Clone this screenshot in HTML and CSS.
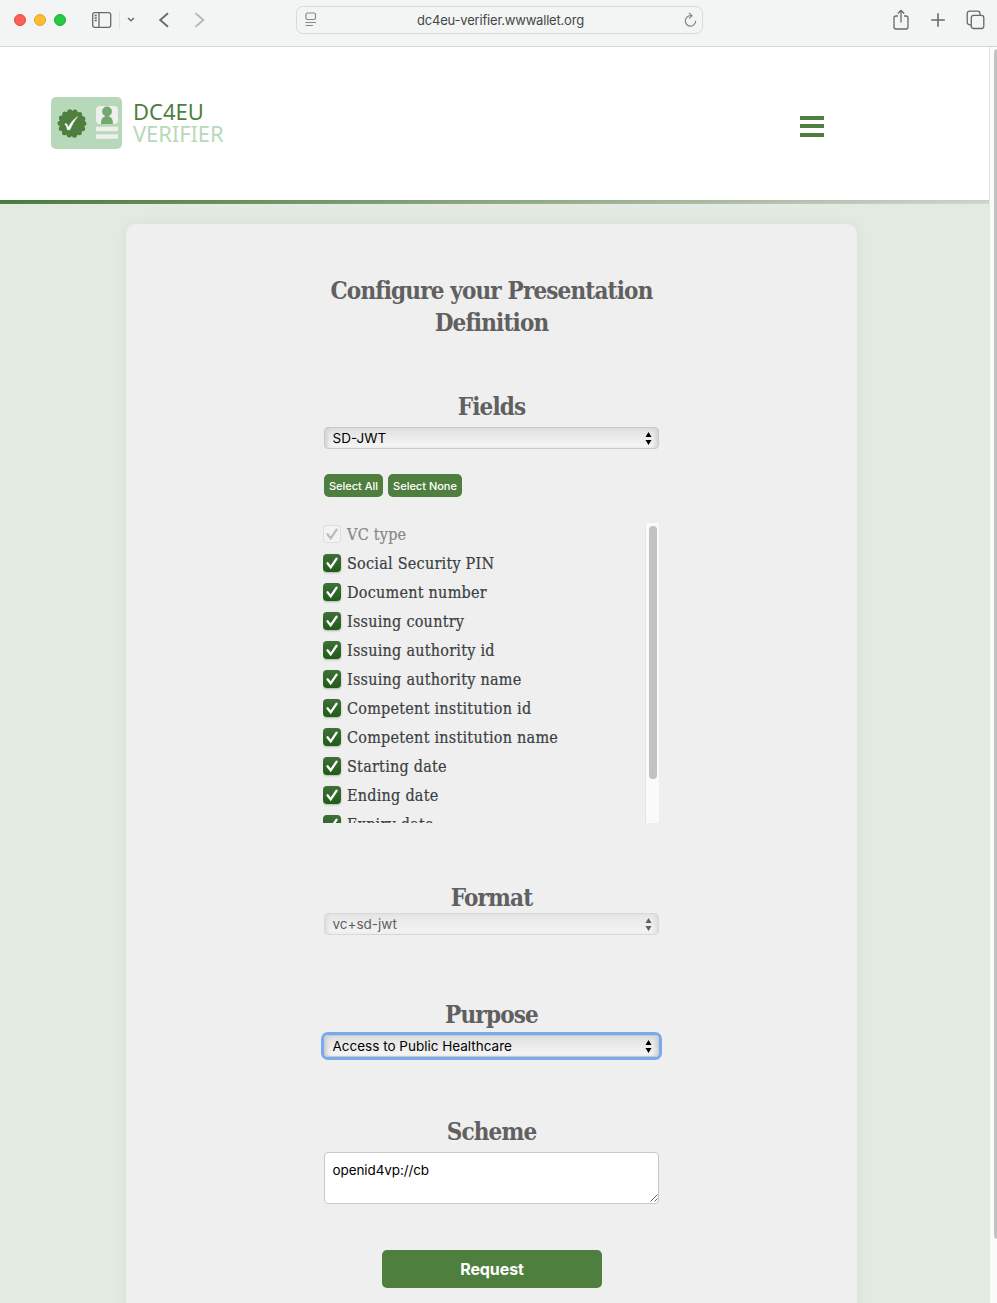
FILE: index.html
```
<!DOCTYPE html>
<html lang="en">
<head>
<meta charset="utf-8">
<title>DC4EU Verifier</title>
<link rel="stylesheet" href="styles.css">
</head>
<body>
<div class="window">
  <header class="toolbar">
    <div class="lights"><i class="light red"></i><i class="light yellow"></i><i class="light green"></i></div>
    <svg class="icon sidebar-icon" width="20" height="16" viewBox="0 0 20 16"><rect x=".7" y=".7" width="18" height="14.6" rx="2"/><path d="M7 1v14M2.600 3.500h2.200M2.600 6h2.200M2.600 8.500h2.200"/></svg>
    <i class="divider"></i>
    <svg class="icon caret-icon" width="8" height="5" viewBox="0 0 8 5"><path d="M1 1l3 2.700L7 1"/></svg>
    <svg class="icon nav-icon back" width="10" height="16" viewBox="0 0 10 16"><path d="M9 1.200L1.200 8 9 14.800"/></svg>
    <svg class="icon nav-icon forward" width="10" height="16" viewBox="0 0 10 16"><path d="M.5 1.200L8.300 8 .5 14.800"/></svg>
    <div class="address">
      <svg class="icon page-icon" width="12" height="15" viewBox="0 0 12 15"><rect x="1" y="1" width="9.500" height="6.500" rx="1.500"/><path d="M.5 10.500h10.500M.5 13.500h7.500"/></svg>
      <span class="url">dc4eu-verifier.wwwallet.org</span>
      <svg class="icon reload-icon" width="13" height="16" viewBox="0 0 13 16"><path d="M7.500 3.800A5.200 5.200 0 1 0 11.700 8.800M5 .8l3 3-2.800 2.800"/></svg>
    </div>
    <svg class="icon share-icon" width="16" height="21" viewBox="0 0 16 21"><path d="M5 7H3a2 2 0 0 0-2 2v9a2 2 0 0 0 2 2h10a2 2 0 0 0 2-2V9a2 2 0 0 0-2-2h-2M8 13.500V1.500M4.800 4.500L8 1.300l3.200 3.200"/></svg>
    <svg class="icon plus-icon" width="14" height="14" viewBox="0 0 14 14"><path d="M7 .2v13.600M.2 7h13.600"/></svg>
    <svg class="icon tabs-icon" width="19" height="20" viewBox="0 0 19 20"><rect x="5.300" y="5.300" width="12.500" height="13.200" rx="2.500"/><path d="M5.300 14.800H3.700a2.500 2.500 0 0 1-2.500-2.500V3.600a2.500 2.500 0 0 1 2.500-2.500h7.800A2.500 2.500 0 0 1 14 3.600v1.700"/></svg>
  </header>
  <div class="viewport">
    <main class="page">
      <div class="site-header">
        <svg class="badge" width="71" height="52" viewBox="0 0 71 52">
          <rect width="71" height="52" rx="5" fill="#b7d9b9"/>
          <circle cx="21" cy="26.500" r="12.600" fill="#4e7f3e"/>
          <circle cx="21" cy="26.500" r="11.900" fill="none" stroke="#4e7f3e" stroke-width="5" stroke-linecap="round" stroke-dasharray="0 5.341"/>
          <path d="M14.300 26.500c1.500-.2 2.300 1.500 3 4 2-4 4.500-7.500 9.300-11-3.500 4.500-5.700 8.500-7.700 13.300h-2.600c-.5-2.500-1-4.300-2.300-5.300z" fill="#fff" stroke="#fff" stroke-width=".5"/>
          <rect x="45" y="9" width="22" height="18" rx="4" fill="#edf0ed"/>
          <ellipse cx="56" cy="14.500" rx="4.900" ry="5" fill="#72a96f"/>
          <path d="M50 27c0-5 1.800-7 4-7.500v-2h4v2c2.200.5 4 2.500 4 7.500z" fill="#72a96f"/>
          <path d="M45 32h22M45 39.500h22" stroke="#edf0ed" stroke-width="4.500"/>
        </svg>
        <div class="brand"><span class="brand-top">DC4EU</span><span class="brand-sub">VERIFIER</span></div>
        <div class="menu"><i></i><i></i><i></i></div>
      </div>
      <div class="accent"></div>
      <section class="card">
        <form class="form">
          <h1 class="heading title"><span class="line">Configure your Presentation</span> Definition</h1>
          <h2 class="heading fields-heading">Fields</h2>
          <div class="select">SD-JWT<svg class="arrows" width="7" height="13" viewBox="0 0 7 13"><path d="M3.500 0L6.500 5h-6zM3.500 13L.5 8h6z"/></svg></div>
          <div class="actions"><button type="button" class="pick all">Select All</button><button type="button" class="pick none">Select None</button></div>
          <div class="list-box">
            <div class="list">
              <div class="row disabled"><svg class="check" viewBox="0 0 18 18"><path d="M4.500 9.300l3.200 4L13.600 4.600"/></svg><span>VC type</span></div>
              <div class="row"><svg class="check" viewBox="0 0 18 18"><path d="M4.500 9.300l3.200 4L13.600 4.600"/></svg><span>Social Security PIN</span></div>
              <div class="row"><svg class="check" viewBox="0 0 18 18"><path d="M4.500 9.300l3.200 4L13.600 4.600"/></svg><span>Document number</span></div>
              <div class="row"><svg class="check" viewBox="0 0 18 18"><path d="M4.500 9.300l3.200 4L13.600 4.600"/></svg><span>Issuing country</span></div>
              <div class="row"><svg class="check" viewBox="0 0 18 18"><path d="M4.500 9.300l3.200 4L13.600 4.600"/></svg><span>Issuing authority id</span></div>
              <div class="row"><svg class="check" viewBox="0 0 18 18"><path d="M4.500 9.300l3.200 4L13.600 4.600"/></svg><span>Issuing authority name</span></div>
              <div class="row"><svg class="check" viewBox="0 0 18 18"><path d="M4.500 9.300l3.200 4L13.600 4.600"/></svg><span>Competent institution id</span></div>
              <div class="row"><svg class="check" viewBox="0 0 18 18"><path d="M4.500 9.300l3.200 4L13.600 4.600"/></svg><span>Competent institution name</span></div>
              <div class="row"><svg class="check" viewBox="0 0 18 18"><path d="M4.500 9.300l3.200 4L13.600 4.600"/></svg><span>Starting date</span></div>
              <div class="row"><svg class="check" viewBox="0 0 18 18"><path d="M4.500 9.300l3.200 4L13.600 4.600"/></svg><span>Ending date</span></div>
              <div class="row"><svg class="check" viewBox="0 0 18 18"><path d="M4.500 9.300l3.200 4L13.600 4.600"/></svg><span>Expiry date</span></div>
            </div>
            <div class="list-track"><i class="list-thumb"></i></div>
          </div>
          <h2 class="heading format-heading">Format</h2>
          <div class="select off">vc+sd-jwt<svg class="arrows" width="7" height="13" viewBox="0 0 7 13"><path d="M3.500 0L6.500 5h-6zM3.500 13L.5 8h6z"/></svg></div>
          <h2 class="heading purpose-heading">Purpose</h2>
          <div class="select focused">Access to Public Healthcare<svg class="arrows" width="7" height="13" viewBox="0 0 7 13"><path d="M3.500 0L6.500 5h-6zM3.500 13L.5 8h6z"/></svg></div>
          <h2 class="heading scheme-heading">Scheme</h2>
          <div class="textarea">openid4vp://cb<svg class="grip" width="8" height="8" viewBox="0 0 8 8"><path d="M.5 7.500l7-7M4.500 7.500l3-3"/></svg></div>
          <button type="button" class="request">Request</button>
        </form>
      </section>
    </main>
    <div class="track"><i class="thumb"></i></div>
  </div>
</div>
</body>
</html>
```
FILE: styles.css
```
* { box-sizing: border-box; }
body { margin: 0; font-family: Inter, sans-serif; background: #fff; }
.window { width: 997px; height: 1303px; overflow: hidden; display: flex; flex-direction: column; }

.toolbar { flex: none; height: 47px; padding: 0 12px 7px 14px; display: flex; align-items: center; background: #f3f5f4; border-bottom: 1px solid #d2d7d4; }
.lights { display: flex; gap: 8px; }
.light { width: 12px; height: 12px; border-radius: 50%; border: 1px solid #e2463f; background: #ff5f57; }
.light.yellow { background: #febc2e; border-color: #e1a325; }
.light.green { background: #28c840; border-color: #1dad2b; }
.icon { flex: none; fill: none; stroke: #686a69; stroke-width: 1.3; }
.sidebar-icon { margin-left: 26px; }
.divider { width: 1px; height: 18px; margin-left: 7px; background: #e1e4e2; }
.caret-icon { margin-left: 7px; stroke-width: 1.5; }
.nav-icon { stroke-width: 1.8; }
.back { margin-left: 24px; }
.forward { margin-left: 26px; stroke: #b5b7b6; }
.address { width: 407px; height: 28px; margin-left: 91px; padding: 0 5px 0 8px; display: flex; align-items: center; justify-content: space-between; border: 1px solid #d6dad8; border-radius: 7px; }
.page-icon, .reload-icon { stroke: #858786; stroke-width: 1.2; }
.url { font-size: 13px; letter-spacing: -.2px; color: #454746; line-height: 16px; }
.share-icon { margin-left: 190px; }
.plus-icon { margin-left: 22px; stroke-width: 1.6; }
.tabs-icon { margin-left: auto; }

.viewport { flex: 1; min-height: 0; display: flex; }
.page { width: 989px; display: flex; flex-direction: column; align-items: center; background: #e3eae1; }
.site-header { width: 100%; height: 153px; flex: none; padding: 0 165px 1px 51px; display: flex; align-items: center; background: #fff; }
.badge { flex: none; }
.brand { margin: -2px 0 0 11px; display: flex; flex-direction: column; font-family: "Noto Sans", sans-serif; font-size: 22px; line-height: 22px; }
.brand-top { color: #4e7f3e; }
.brand-sub { color: #b7d9b9; letter-spacing: -.100px; }
.menu { width: 24px; margin: 6px 0 0 auto; display: grid; gap: 4.500px; }
.menu i { height: 4px; background: #4e7f3e; }
.accent { flex: none; width: 100%; height: 4px; background: linear-gradient(rgba(0, 0, 0, .05), transparent), linear-gradient(90deg, #4e7f3e, #d5d9d1); }

.card { flex: none; width: 731px; height: 1120px; margin: 20px 0 0 -6px; display: flex; justify-content: center; background: #efefef; border-radius: 10px; box-shadow: 0 0 14px rgba(0, 40, 10, .05); }
.form { width: 335px; padding-top: 50px; display: flex; flex-direction: column; }
.heading { margin: 0; padding-top: 1px; height: 32px; font-family: "DejaVu Serif Condensed", "DejaVu Serif", serif; font-stretch: condensed; font-weight: 700; font-size: 24px; line-height: 32px; color: #606060; text-align: center; letter-spacing: -.850px; }
.title { height: 64px; }
.line { display: block; white-space: nowrap; }
.fields-heading { margin-top: 52px; }
.format-heading { margin-top: 58px; }
.purpose-heading { margin-top: 63px; }
.scheme-heading { margin-top: 58px; }
.select { height: 22px; padding: 0 6px 0 7.500px; display: flex; align-items: center; justify-content: space-between; border: 1px solid #c9c9c9; border-radius: 4px; font-size: 13.500px; color: #000; background: linear-gradient(#e0e0e0, #f7f7f7); box-shadow: inset 4px 0 4px -2px #cfcfcf, inset -4px 0 4px -2px #cfcfcf; }
.fields-heading + .select { margin-top: 5px; }
.purpose-heading + .select { margin-top: 5px; }
.select.off { color: #606060; border-color: #d9d9d9; background: linear-gradient(#e6e6e6, #f4f4f4); box-shadow: inset 4px 0 4px -2px #dadada, inset -4px 0 4px -2px #dadada; }
.select.focused { outline: 3px solid #79a9ee; }
.arrows { fill: currentColor; }
.actions { margin-top: 25px; display: flex; gap: 5px; }
.pick { height: 23px; padding: 1px 0 0; border: 0; border-radius: 5px; background: #4e7f3e; color: #fff; font: 500 11px/22px Inter, sans-serif; white-space: nowrap; }
.all { width: 59px; }
.none { width: 74px; }
.list-box { width: 336px; height: 300px; margin: 26px 0 0 -1px; display: flex; overflow: hidden; }
.list { flex: 1; padding-top: 2px; }
.row { height: 29px; padding-bottom: 11px; display: flex; align-items: center; gap: 6px; font-family: "DejaVu Serif Condensed", "DejaVu Serif", serif; font-stretch: condensed; font-size: 16px; line-height: 18px; letter-spacing: .250px; color: #3c3f42; white-space: nowrap; }
.row span { padding-top: 1px; -webkit-text-stroke: .2px currentColor; }
.check { flex: none; width: 18px; height: 18px; border-radius: 4px; background: linear-gradient(#3f7039, #215b18); box-shadow: 0 1px 2px rgba(0, 60, 0, .3); }
.check path { fill: none; stroke: #fff; stroke-width: 2.300; stroke-linecap: round; }
.disabled { color: #888; }
.disabled .check { background: #f3f3f3; box-shadow: inset 0 0 0 1px #dedede; }
.disabled .check path { stroke: #bcbcbc; }
.list-track { width: 14px; padding: 3px 2px 0 3px; background: #fafafa; border-left: 1px solid #e5e5e5; }
.list-thumb { display: block; width: 8px; height: 253px; border-radius: 4px; background: #c2c2c2; }
.textarea { height: 52px; margin-top: 5px; padding: 9px 7.500px; display: flex; justify-content: space-between; border: 1px solid #c8c8c8; border-radius: 4px; background: #fff; font-size: 13.500px; letter-spacing: -.1px; line-height: 17px; color: #000; }
.grip { align-self: flex-end; margin: 0 -7.500px -8px 0; fill: none; stroke: #555; stroke-width: .9; }
.request { align-self: center; width: 220px; height: 38px; margin: 46px 0 0 1px; padding: 1px 0 0; border: 0; border-radius: 5px; background: #4e7f3e; color: #fff; font: 700 16px/37px Inter, sans-serif; letter-spacing: -.1px; }
.track { width: 8px; padding: 2px 0 0 4px; background: #fafafa; border-left: 1px solid #e5e5e5; }
.thumb { display: block; width: 4px; height: 1190px; border-radius: 4px 0 0 4px; background: #c2c2c2; }
```
